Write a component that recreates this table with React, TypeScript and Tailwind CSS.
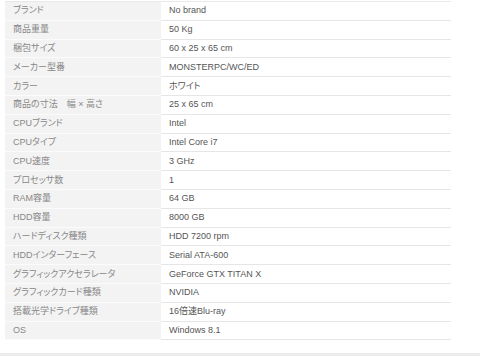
const specs: [string, string][] = [
  ["ブランド", "No brand"],
  ["商品重量", "50 Kg"],
  ["梱包サイズ", "60 x 25 x 65 cm"],
  ["メーカー型番", "MONSTERPC/WC/ED"],
  ["カラー", "ホワイト"],
  ["商品の寸法　幅 × 高さ", "25 x 65 cm"],
  ["CPUブランド", "Intel"],
  ["CPUタイプ", "Intel Core i7"],
  ["CPU速度", "3 GHz"],
  ["プロセッサ数", "1"],
  ["RAM容量", "64 GB"],
  ["HDD容量", "8000 GB"],
  ["ハードディスク種類", "HDD 7200 rpm"],
  ["HDDインターフェース", "Serial ATA-600"],
  ["グラフィックアクセラレータ", "GeForce GTX TITAN X"],
  ["グラフィックカード種類", "NVIDIA"],
  ["搭載光学ドライブ種類", "16倍速Blu-ray"],
  ["OS", "Windows 8.1"],
];

export default function App() {
  return (
    <div
      className="w-[480px] h-[356px] bg-white flex flex-col overflow-hidden [font-feature-settings:'palt']"
      style={{ fontFamily: '"Liberation Sans", "Noto Sans CJK JP", sans-serif' }}
    >
      <div className="ml-[5px] mt-[1px] w-[446px] border-t border-[#e9e9e9]">
        {specs.map(([label, value]) => (
          <div key={label} className="flex h-[18.8px] text-[9px] leading-none">
            <div className="w-[156px] shrink-0 flex items-center px-2 bg-[#f3f3f3] text-[#888] border-b border-[#fbfbfb]">
              {label}
            </div>
            <div className="flex-1 flex items-center px-2 text-[#555] border-b border-[#e6e6e6]">
              {value}
            </div>
          </div>
        ))}
      </div>
      <div className="mt-auto h-[3px] bg-[#ececec]" />
    </div>
  );
}
